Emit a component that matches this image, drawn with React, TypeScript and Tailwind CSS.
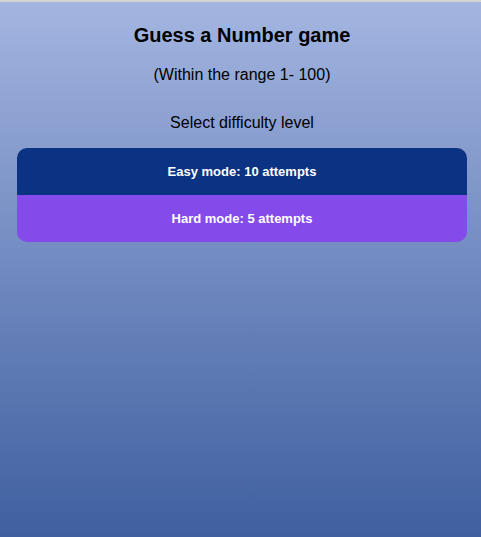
const App = () => {
  return (
    <div
      className="min-h-[537px] w-full border-t-2 border-[#d4d4d4] bg-gradient-to-b from-[#a4b5e0] to-[#3f5f9f] pl-[17px] pr-[14px] pt-[21px] text-center text-black"
      style={{ fontFamily: '"Liberation Sans", Arial, sans-serif' }}
    >
      <h1 className="text-[20px] font-bold leading-6">Guess a Number game</h1>
      <p className="mt-[16px] text-[16px] leading-6">(Within the range 1- 100)</p>
      <p className="mt-[24px] text-[16px] leading-6">Select difficulty level</p>

      {/* difficulty buttons */}
      <div className="mt-[13px] flex flex-col overflow-hidden rounded-[10px]">
        <button className="h-[47px] bg-[#0c3383] text-[13px] font-bold text-white">
          Easy mode: 10 attempts
        </button>
        <button className="h-[47px] bg-[#844bea] text-[13px] font-bold text-white">
          Hard mode: 5 attempts
        </button>
      </div>
    </div>
  );
};

export default App;
